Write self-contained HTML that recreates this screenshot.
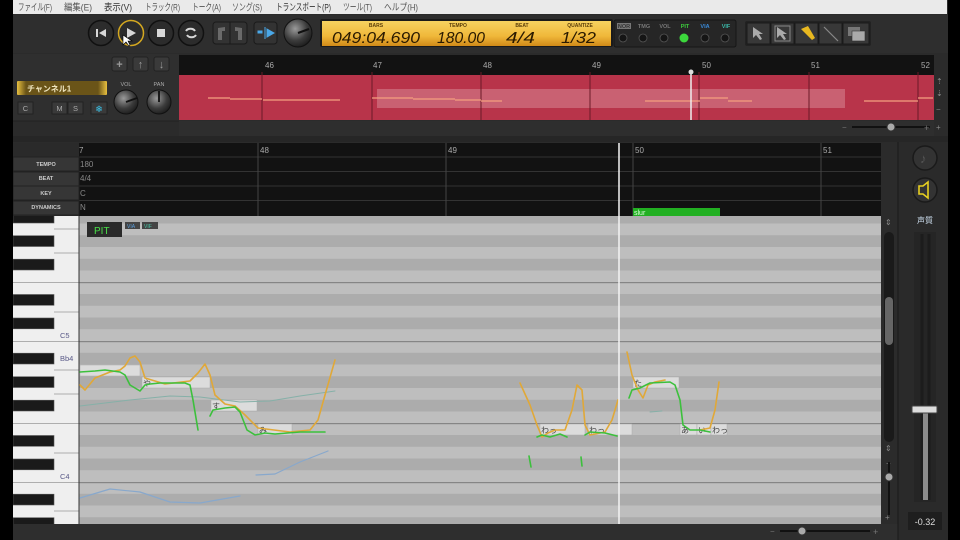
<!DOCTYPE html>
<html><head><meta charset="utf-8"><style>
html,body{margin:0;padding:0;background:#000;width:960px;height:540px;overflow:hidden}
svg{display:block}
text{font-family:"Liberation Sans","Noto Sans CJK JP",sans-serif}
</style></head><body>
<svg width="960" height="540" viewBox="0 0 960 540" xmlns="http://www.w3.org/2000/svg">
<defs>
<pattern id="roll" patternUnits="userSpaceOnUse" x="0" y="200" width="20" height="141">
<rect width="20" height="141" fill="#bebebe"/>
<rect y="11.75" width="20" height="11.75" fill="#acacac"/>
<rect y="35.25" width="20" height="11.75" fill="#acacac"/>
<rect y="58.75" width="20" height="11.75" fill="#acacac"/>
<rect y="94" width="20" height="11.75" fill="#acacac"/>
<rect y="117.5" width="20" height="11.75" fill="#acacac"/>
<rect y="0" width="20" height="1.2" fill="#858585"/>
<rect y="82" width="20" height="1.2" fill="#858585"/>
</pattern>
<pattern id="keys" patternUnits="userSpaceOnUse" x="0" y="200" width="80" height="141">
<rect width="80" height="141" fill="#efefef"/>
<g fill="#1a1a1a" stroke="#555" stroke-width="0.6">
<rect x="13" y="12.2" width="41" height="10.8"/>
<rect x="13" y="35.7" width="41" height="10.8"/>
<rect x="13" y="59.2" width="41" height="10.8"/>
<rect x="13" y="94.5" width="41" height="10.8"/>
<rect x="13" y="118" width="41" height="10.8"/>
</g>
<g stroke="#999" stroke-width="0.8">
<line x1="13" y1="0.5" x2="80" y2="0.5"/><line x1="13" y1="82.5" x2="80" y2="82.5"/>
<line x1="54" y1="29" x2="80" y2="29"/><line x1="54" y1="53" x2="80" y2="53"/><line x1="54" y1="112" x2="80" y2="112"/>
</g>
</pattern>
<radialGradient id="knob" cx="0.4" cy="0.35" r="0.7"><stop offset="0" stop-color="#9a9a9a"/><stop offset="0.6" stop-color="#3c3c3c"/><stop offset="1" stop-color="#1a1a1a"/></radialGradient>
<linearGradient id="lcd" x1="0" y1="0" x2="0" y2="1"><stop offset="0" stop-color="#f6d260"/><stop offset="0.6" stop-color="#f0b83a"/><stop offset="1" stop-color="#d08a18"/></linearGradient>
<linearGradient id="gold" x1="0" y1="0" x2="1" y2="0"><stop offset="0" stop-color="#e8c040"/><stop offset="0.1" stop-color="#6a5418"/><stop offset="0.9" stop-color="#6a5418"/><stop offset="1" stop-color="#e8c040"/></linearGradient>
</defs>

<rect x="13" y="0" width="935" height="540" fill="#2b2b2b"/>
<rect x="13" y="0" width="934" height="14" fill="#eaeaea"/>
<g font-size="9.5" fill="#555">
<text x="18" y="10.5" textLength="34" lengthAdjust="spacingAndGlyphs">ファイル(F)</text>
<text x="64" y="10.5" textLength="28" lengthAdjust="spacingAndGlyphs">編集(E)</text>
<text x="104" y="10.5" fill="#333" textLength="28" lengthAdjust="spacingAndGlyphs">表示(V)</text>
<text x="145" y="10.5" textLength="35" lengthAdjust="spacingAndGlyphs">トラック(R)</text>
<text x="192" y="10.5" textLength="29" lengthAdjust="spacingAndGlyphs">トーク(A)</text>
<text x="232" y="10.5" textLength="30" lengthAdjust="spacingAndGlyphs">ソング(S)</text>
<text x="276" y="10.5" fill="#333" textLength="55" lengthAdjust="spacingAndGlyphs">トランスポート(P)</text>
<text x="343" y="10.5" textLength="29" lengthAdjust="spacingAndGlyphs">ツール(T)</text>
<text x="384" y="10.5" textLength="34" lengthAdjust="spacingAndGlyphs">ヘルプ(H)</text>
</g>
<rect x="13" y="15" width="935" height="38" fill="#2e2e2e"/>
<g stroke="#111" stroke-width="1.5" fill="#2c2c2c">
<circle cx="101" cy="33" r="12.5"/><circle cx="131" cy="33" r="12.5" stroke="#d4a820"/><circle cx="161" cy="33" r="12.5"/><circle cx="191" cy="33" r="12.5"/>
</g>
<g fill="#d8d8d8">
<rect x="96" y="29" width="2" height="8"/><path d="M106 29 L99 33 L106 37Z"/>
<path d="M127 28 L136 33 L127 38Z"/>
<rect x="157" y="29" width="8" height="8"/>
</g>
<path d="M186 31 a5 4 0 0 1 9 0 M196 35 a5 4 0 0 1 -9 0" stroke="#d8d8d8" stroke-width="2" fill="none"/>
<path d="M123 35 L123 45 L126 42 L129 46 L130 45 L128 41 L132 41Z" fill="#fff" stroke="#000" stroke-width="0.6"/>
<rect x="213" y="22" width="34" height="22" rx="3" fill="#333" stroke="#1a1a1a"/>
<line x1="230" y1="22" x2="230" y2="44" stroke="#1a1a1a"/>
<path d="M218 28 L225 27 L225 31 L222 31 L222 40 L218 40Z M242 28 L235 27 L235 31 L238 31 L238 40 L242 40Z" fill="#6a6a6a"/>
<rect x="254" y="22" width="23" height="22" rx="3" fill="#333" stroke="#1a1a1a"/>
<path d="M258 31 h4 v2 h-4z M265 27 v12 M267 29 L274 33 L267 37Z" fill="#4aa8e8" stroke="#4aa8e8" stroke-width="1"/>
<circle cx="298" cy="33" r="14" fill="url(#knob)" stroke="#111"/>
<line x1="298" y1="33" x2="309" y2="29" stroke="#111" stroke-width="2"/>
<rect x="320" y="19" width="293" height="28" rx="2" fill="#1a1a1a"/>
<rect x="322" y="21" width="289" height="25" fill="url(#lcd)"/>
<g font-size="5" fill="#5a3d08" font-weight="bold" text-anchor="middle">
<text x="376" y="27">BARS</text><text x="458" y="27">TEMPO</text><text x="522" y="27">BEAT</text><text x="580" y="27">QUANTIZE</text>
</g>
<g font-family="Liberation Mono,monospace" font-size="16" font-style="italic" fill="#2a1a00">
<text x="332" y="43" textLength="88" lengthAdjust="spacingAndGlyphs">049:04.690</text>
<text x="437" y="43" textLength="48" lengthAdjust="spacingAndGlyphs">180.00</text>
<text x="506" y="43" textLength="29" lengthAdjust="spacingAndGlyphs">4/4</text>
<text x="561" y="43" textLength="35" lengthAdjust="spacingAndGlyphs">1/32</text>
</g>
<rect x="614" y="20" width="122" height="27" rx="2" fill="#262626" stroke="#151515"/>
<g font-size="5.5" font-weight="bold" text-anchor="middle">
<rect x="617" y="23" width="14" height="6" fill="#777"/><text x="624" y="28" fill="#333">NOR</text>
<text x="644" y="28" fill="#777">TMG</text><text x="665" y="28" fill="#777">VOL</text><text x="685" y="28" fill="#3ccc3c">PIT</text><text x="705" y="28" fill="#3a8ad8">VIA</text><text x="726" y="28" fill="#3ab8a8">VIF</text>
</g>
<g fill="#151515" stroke="#555" stroke-width="0.8">
<circle cx="623" cy="38" r="4"/><circle cx="643" cy="38" r="4"/><circle cx="664" cy="38" r="4"/><circle cx="705" cy="38" r="4"/><circle cx="725" cy="38" r="4"/>
</g>
<circle cx="684" cy="38" r="4.5" fill="#3cd83c"/>
<rect x="745" y="21" width="126" height="25" rx="2" fill="#222"/>
<g fill="#383838" stroke="#1a1a1a"><rect x="747" y="23" width="23" height="21"/><rect x="771" y="23" width="23" height="21"/><rect x="795" y="23" width="23" height="21"/><rect x="819" y="23" width="23" height="21"/><rect x="843" y="23" width="26" height="21"/></g>
<path d="M753 27 L753 38 L756 35 L760 40 L762 39 L759 34 L763 34Z" fill="#aaa"/>
<rect x="775" y="26" width="15" height="15" fill="none" stroke="#888"/><path d="M777 27 L777 38 L780 35 L784 40 L786 39 L783 34 L787 34Z" fill="#aaa"/>
<path d="M801 29 L808 26 L815 38 L812 40Z" fill="#e8b820"/>
<line x1="824" y1="27" x2="838" y2="41" stroke="#888" stroke-width="1.2"/>
<rect x="848" y="27" width="12" height="9" fill="#777"/><rect x="852" y="31" width="13" height="10" fill="#aaa" stroke="#333" stroke-width="0.6"/>

<rect x="13" y="54" width="166" height="82" fill="#2f2f2f"/>
<g fill="#3a3a3a" stroke="#222"><rect x="112" y="57" width="15" height="14" rx="2"/><rect x="133" y="57" width="15" height="14" rx="2"/><rect x="154" y="57" width="15" height="14" rx="2"/></g>
<g fill="#999" font-size="11" text-anchor="middle" font-weight="bold"><text x="119.5" y="68">+</text><text x="140.5" y="68">↑</text><text x="161.5" y="68">↓</text></g>
<rect x="17" y="81" width="90" height="14" rx="1" fill="url(#gold)"/>
<text x="27" y="91.5" font-size="8" fill="#f0e6c0" font-weight="bold">チャンネル1</text>
<text x="126" y="86" font-size="5.5" fill="#aaa" text-anchor="middle">VOL</text><text x="159" y="86" font-size="5.5" fill="#aaa" text-anchor="middle">PAN</text>
<circle cx="126" cy="102" r="12" fill="url(#knob)" stroke="#111"/><line x1="126" y1="102" x2="137" y2="98" stroke="#111" stroke-width="1.8"/>
<circle cx="159" cy="102" r="12" fill="url(#knob)" stroke="#111"/><line x1="159" y1="102" x2="159" y2="91" stroke="#111" stroke-width="1.8"/>
<g fill="#3a3a3a" stroke="#222"><rect x="18" y="102" width="15" height="12"/><rect x="52" y="102" width="15" height="12"/><rect x="68" y="102" width="15" height="12"/><rect x="91" y="102" width="16" height="12"/></g>
<g font-size="7.5" fill="#aaa" text-anchor="middle"><text x="25.5" y="111">C</text><text x="59.5" y="111">M</text><text x="75.5" y="111">S</text><text x="99" y="112" fill="#3ac8f0" font-size="9">❄</text></g>
<rect x="13" y="121" width="166" height="15" fill="#2b2b2b"/>
<line x1="13" y1="121" x2="179" y2="121" stroke="#222"/>
<rect x="179" y="55" width="755" height="20" fill="#121212"/>
<g font-size="8" fill="#aaa"><text x="265" y="68">46</text><text x="373" y="68">47</text><text x="483" y="68">48</text><text x="592" y="68">49</text><text x="702" y="68">50</text><text x="811" y="68">51</text><text x="921" y="68">52</text></g>
<rect x="179" y="75" width="755" height="45" fill="#b8344a"/>
<rect x="377" y="89" width="468" height="19" fill="#cf7080" opacity="0.75"/>
<g stroke="#6a1a28" stroke-width="1"><line x1="262" y1="72" x2="262" y2="120"/><line x1="372" y1="72" x2="372" y2="120"/><line x1="481" y1="72" x2="481" y2="120"/><line x1="590" y1="72" x2="590" y2="120"/><line x1="699" y1="72" x2="699" y2="120"/><line x1="809" y1="72" x2="809" y2="120"/><line x1="918" y1="72" x2="918" y2="120"/></g>
<g stroke="#f4a080" stroke-width="1.3"><path d="M208 98 H230 M230 99 H262 M263 100 H340 M372 98 H413 M413 99 H455 M455 100 H481 M481 101 H502 M645 101 H700 M700 98 H728 M728 101 H752 M864 101 H918 M918 98 H933"/></g>
<line x1="691" y1="72" x2="691" y2="120" stroke="#eee" stroke-width="1.5"/><circle cx="691" cy="72" r="2.5" fill="#ddd"/>
<g fill="#888" font-size="8"><text x="936" y="84">⇡</text><text x="936" y="96">⇣</text><text x="936" y="112">−</text><text x="936" y="130">+</text></g>
<rect x="179" y="121" width="755" height="15" fill="#2e2e2e"/>
<line x1="852" y1="127" x2="930" y2="127" stroke="#111" stroke-width="2"/><circle cx="891" cy="127" r="4" fill="#aaa" stroke="#333"/>
<text x="842" y="130" font-size="8" fill="#777">−</text><text x="924" y="131" font-size="9" fill="#777">+</text>
<rect x="13" y="136" width="935" height="6" fill="#262626"/>

<rect x="79" y="143" width="802" height="73" fill="#121212"/>
<g stroke="#333" stroke-width="1"><line x1="79" y1="157" x2="881" y2="157"/><line x1="79" y1="171.5" x2="881" y2="171.5"/><line x1="79" y1="186" x2="881" y2="186"/><line x1="79" y1="200.5" x2="881" y2="200.5"/></g>
<g stroke="#444"><line x1="258" y1="143" x2="258" y2="216"/><line x1="446" y1="143" x2="446" y2="216"/><line x1="633" y1="143" x2="633" y2="216"/><line x1="821" y1="143" x2="821" y2="216"/></g>
<g font-size="8" fill="#aaa"><text x="79" y="153">7</text><text x="260" y="153">48</text><text x="448" y="153">49</text><text x="635" y="153">50</text><text x="823" y="153">51</text></g>
<g font-size="8" fill="#888"><text x="80" y="167">180</text><text x="80" y="181">4/4</text><text x="80" y="196">C</text><text x="80" y="210">N</text></g>
<rect x="13" y="143" width="66" height="73" fill="#2a2a2a"/>
<g fill="#363636" stroke="#222"><rect x="13" y="157" width="66" height="14"/><rect x="13" y="172" width="66" height="14"/><rect x="13" y="186" width="66" height="14"/><rect x="13" y="201" width="66" height="14"/></g>
<g font-size="5.5" fill="#ccc" text-anchor="middle" font-weight="bold"><text x="46" y="166">TEMPO</text><text x="46" y="180">BEAT</text><text x="46" y="195">KEY</text><text x="46" y="209">DYNAMICS</text></g>
<rect x="633" y="208" width="87" height="8" fill="#22b022"/><text x="634" y="215" font-size="7" fill="#dfd">slur</text>

<rect x="79" y="216" width="802" height="308" fill="url(#roll)"/>
<rect x="13" y="216" width="66" height="308" fill="url(#keys)"/>
<line x1="79" y1="216" x2="79" y2="524" stroke="#333"/>
<g font-size="7.5" fill="#5a5a88"><text x="60" y="338">C5</text><text x="60" y="361">Bb4</text><text x="60" y="479">C4</text></g>
<rect x="87" y="222" width="35" height="15" fill="#2a2a2a"/><text x="94" y="234" font-size="10" fill="#48e048">PIT</text>
<rect x="125" y="222" width="15" height="7" fill="#444"/><text x="127" y="228" font-size="5" fill="#5aa0e0">VIA</text>
<rect x="142" y="222" width="16" height="7" fill="#444"/><text x="144" y="228" font-size="5" fill="#48c8a8">VIF</text>
<g fill="#dcdcdc" stroke="#aaa" stroke-width="0.5">
<rect x="80" y="365" width="60" height="11"/><rect x="142" y="377" width="68" height="11"/><rect x="211" y="400" width="46" height="11"/><rect x="258" y="424" width="34" height="11"/>
<rect x="540" y="424" width="45" height="11"/><rect x="588" y="424" width="44" height="11"/><rect x="633" y="377" width="46" height="11"/><rect x="680" y="424" width="17" height="11"/><rect x="697" y="424" width="14" height="11"/><rect x="711" y="424" width="16" height="11"/>
</g>
<g font-size="8" fill="#444"><text x="143" y="386">や</text><text x="212" y="409">す</text><text x="259" y="433">み</text><text x="541" y="433">わっ</text><text x="589" y="433">わっ</text><text x="634" y="386">た</text><text x="681" y="433">あ</text><text x="698" y="433">い</text><text x="712" y="433">わっ</text></g>
<g fill="none" stroke-linecap="round" stroke-linejoin="round">
<path d="M80 406 L130 400 L170 396 L200 397 L240 402 L270 401 L300 396 L335 391" stroke="#86b0a8" stroke-width="1"/>
<path d="M256 475 L275 474 L300 462 L328 451" stroke="#88a8cc" stroke-width="1.2"/>
<path d="M80 498 L110 489 L140 492 L170 502 L200 503 L240 496" stroke="#88a8cc" stroke-width="1.2"/>
<path d="M80 385 L85 390 L95 378 L110 372 L120 370 L125 366 L130 358 L135 356 L140 362 L145 378 L155 381 L165 384 L190 381 L198 373 L205 364 L210 375 L215 395 L225 404 L235 406 L245 415 L258 428 L290 432 L310 430 L318 420 L325 395 L335 360" stroke="#e0a838" stroke-width="1.6"/>
<path d="M80 372 L95 371 L105 370 L120 372 L125 375 L130 385 L140 391 L145 385 L150 384 L160 383 L185 383 L190 385 L193 400 L198 430 M210 416 L213 410 L225 408 L235 407 L240 412 L247 430 L255 435 L265 433 L275 434 L300 432 L325 432" stroke="#3cc03c" stroke-width="1.6"/>
<path d="M520 383 L530 405 L537 425 L542 437 L548 433 L555 430 L565 430 L572 410 L577 385 L582 390 L585 425 L590 435 L605 432 L612 420 L618 400 M627 352 L632 375 L638 390 L643 398 L648 385 L655 382 L665 380 M700 430 L710 428 L715 410 L719 382" stroke="#e0a838" stroke-width="1.6"/>
<path d="M537 437 L542 435 L550 437 L560 434 L567 437 M585 435 L590 432 L605 433 L617 436 M629 398 L632 390 L640 388 L650 383 L670 382 L675 385 L680 400 L683 425 L690 430 L700 430 L710 432 M529 456 L531 467 M581 457 L582 466" stroke="#3cc03c" stroke-width="1.6"/>
<path d="M650 412 L662 411" stroke="#86b0a8" stroke-width="1"/>
</g>
<line x1="619" y1="143" x2="619" y2="524" stroke="#f4f4f4" stroke-width="1.5"/>
<rect x="881" y="216" width="16" height="308" fill="#2b2b2b"/>
<rect x="884" y="232" width="10" height="210" rx="5" fill="#1a1a1a"/>
<rect x="885" y="297" width="8" height="48" rx="4" fill="#666"/>
<g fill="#888" font-size="8"><text x="885" y="225">⇕</text><text x="885" y="451">⇕</text><text x="886" y="466">−</text><text x="885" y="520">+</text></g>
<line x1="889" y1="462" x2="889" y2="515" stroke="#111" stroke-width="2"/><circle cx="889" cy="477" r="4" fill="#aaa" stroke="#333"/>
<rect x="13" y="524" width="935" height="16" fill="#2e2e2e"/>
<line x1="780" y1="531" x2="870" y2="531" stroke="#111" stroke-width="2"/><circle cx="802" cy="531" r="4" fill="#aaa" stroke="#333"/>
<text x="770" y="534" font-size="8" fill="#777">−</text><text x="873" y="535" font-size="9" fill="#777">+</text>
<rect x="898" y="142" width="50" height="398" fill="#2a2a2a"/>
<line x1="898" y1="142" x2="898" y2="540" stroke="#1a1a1a"/>
<circle cx="925" cy="158" r="12" fill="#333" stroke="#1a1a1a" stroke-width="1.5"/><text x="920" y="163" font-size="13" fill="#555">♪</text>
<circle cx="925" cy="190" r="12" fill="#333" stroke="#1a1a1a" stroke-width="1.5"/>
<path d="M919 186 h4 l5 -4 v16 l-5 -4 h-4z" fill="none" stroke="#e8d020" stroke-width="1.6"/>
<text x="925" y="223" font-size="8" fill="#cde" text-anchor="middle">声質</text>
<rect x="914" y="232" width="22" height="270" fill="#252525"/>
<line x1="922" y1="234" x2="922" y2="500" stroke="#1c1c1c" stroke-width="3"/><line x1="929" y1="234" x2="929" y2="500" stroke="#1c1c1c" stroke-width="3"/>
<rect x="923" y="412" width="5" height="88" fill="#8a8a8a"/>
<rect x="912" y="406" width="25" height="7" rx="1" fill="#ddd" stroke="#444"/>
<rect x="908" y="512" width="34" height="18" fill="#1e1e1e"/>
<text x="925" y="525" font-size="9" fill="#ddd" text-anchor="middle">-0.32</text>
<rect x="0" y="0" width="13" height="540" fill="#000"/>
<rect x="948" y="0" width="12" height="540" fill="#000"/>
</svg>
</body></html>
